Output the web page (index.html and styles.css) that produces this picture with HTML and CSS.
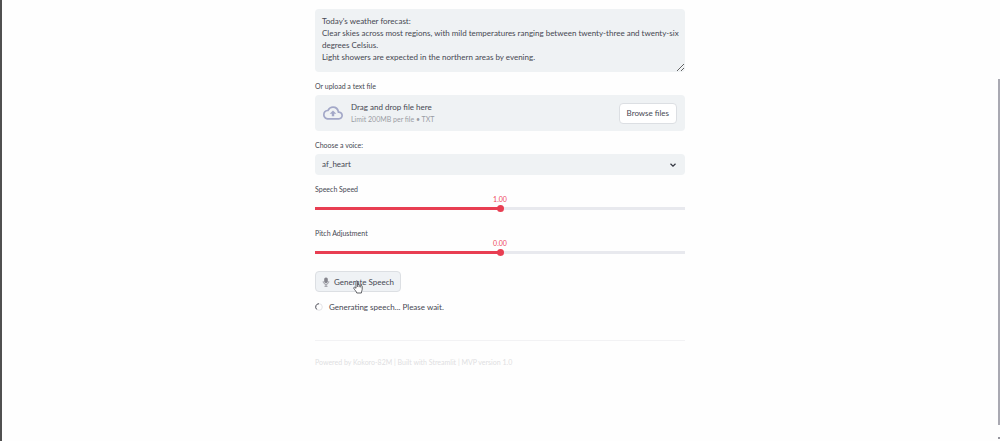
FILE: index.html
```
<!DOCTYPE html>
<html lang="en">
<head>
<meta charset="utf-8">
<meta name="viewport" content="width=device-width, initial-scale=1">
<title>Text to Speech</title>
<link rel="stylesheet" href="styles.css">
</head>
<body>
<main class="page">
  <form class="form">
    <textarea class="text-input" aria-label="Text to convert">Today's weather forecast:
Clear skies across most regions, with mild temperatures ranging between twenty-three and twenty-six degrees Celsius.
Light showers are expected in the northern areas by evening.</textarea>

    <div class="field">
      <span class="label" id="upload-label">Or upload a text file</span>
      <section class="dropzone" aria-labelledby="upload-label">
        <svg class="cloud" viewBox="0 0 24 24" aria-hidden="true">
          <path d="M19.35 10.04A7.49 7.49 0 0 0 12 4C9.11 4 6.6 5.64 5.35 8.04A5.994 5.994 0 0 0 0 14c0 3.31 2.69 6 6 6h13c2.76 0 5-2.24 5-5 0-2.64-2.05-4.78-4.65-4.96zM19 18H6c-2.21 0-4-1.79-4-4 0-2.05 1.53-3.76 3.56-3.97l1.07-.11.5-.95A5.469 5.469 0 0 1 12 6c2.62 0 4.88 1.86 5.39 4.43l.3 1.5 1.53.11A2.98 2.98 0 0 1 22 15c0 1.65-1.35 3-3 3zM8 13h2.55v3h2.9v-3H16l-4-4z"/>
        </svg>
        <div class="drop-text">
          <span>Drag and drop file here</span>
          <small class="hint">Limit 200MB per file • TXT</small>
        </div>
        <button type="button" class="button browse">Browse files</button>
      </section>
    </div>

    <div class="field">
      <label class="label" for="voice">Choose a voice:</label>
      <div class="select-wrap">
        <select class="select" id="voice"><option>af_heart</option></select>
        <svg class="chevron" viewBox="0 0 8 8" aria-hidden="true"><path d="M1.5 2.8 4 5.2 6.5 2.8"/></svg>
      </div>
    </div>

    <div class="field slider">
      <label class="label" for="speed">Speech Speed</label>
      <output class="value" for="speed">1.00</output>
      <input class="range" id="speed" type="range" min="0" max="2" step="0.05" value="1">
    </div>

    <div class="field slider">
      <label class="label" for="pitch">Pitch Adjustment</label>
      <output class="value" for="pitch">0.00</output>
      <input class="range" id="pitch" type="range" min="-1" max="1" step="0.05" value="0">
    </div>

    <div class="action">
      <button type="button" class="button generate">
        <svg class="mic" viewBox="0 0 8 10" aria-hidden="true">
          <rect class="mic-head" x="2.2" y="0.5" width="3.6" height="5.6" rx="1.6"/>
          <path class="mic-stand" d="M1.2 4.3c0 4 5.6 4 5.6 0M4 7.2v2M2.5 9.3h3"/>
        </svg>
        Generate Speech
      </button>
      <svg class="cursor" viewBox="0 0 10 14" aria-hidden="true">
        <path d="M3 8.3V1.7c0-1.2 1.6-1.2 1.6 0V5c.2-.7 1.5-.6 1.6.3.3-.6 1.5-.4 1.5.4.4-.5 1.5-.2 1.5.7v3c0 1-.8 1.6-.8 3.6H3.800C3.500 11.500 1.600 10 .8 8.300c-.4-1 .8-1.500 1.400-.7z"/>
        <path d="M4.600 5v2M6.200 5.500v1.700M7.700 6v1.400"/>
      </svg>
    </div>
  </form>

  <div class="status" role="status">
    <svg class="spinner" viewBox="0 0 8 8" aria-hidden="true">
      <circle class="spinner-track" cx="4" cy="4" r="3.3"/>
      <path class="spinner-arc" d="M1.700 6.400A3.300 3.300 0 0 1 4 .7"/>
    </svg>
    Generating speech... Please wait.
  </div>
  <footer class="footer">Powered by Kokoro-82M | Built with Streamlit | MVP version 1.0</footer>
</main>
<div class="window-edge"></div>
<div class="scrollbar"><div class="thumb"></div><div class="arrow"></div></div>
</body>
</html>
```
FILE: styles.css
```
* { box-sizing: border-box; }

body {
  margin: 0;
  background: #fefefe;
  color: #464852;
  font: 8px/12px Lato, "Noto Sans", sans-serif;
}

button, select, textarea { font: inherit; color: inherit; }

.page {
  max-width: 370px;
  margin: 0 auto;
  padding: 9px 0;
}

.form { display: flex; flex-direction: column; gap: 8px; }
.field { display: flex; flex-direction: column; }
.label { font-size: 7px; line-height: 13px; padding-bottom: 2px; }

.text-input {
  display: block;
  width: 100%;
  height: 63px;
  padding: 6px 2px 6px 7px;
  border: 0;
  border-radius: 4px;
  background: #eff2f4;
  outline: 0;
  overflow: hidden;
  resize: vertical;
}

.dropzone {
  display: flex;
  align-items: center;
  gap: 8px;
  padding: 6px 8px;
  border-radius: 4px;
  background: #eff2f4;
}
.cloud { width: 20px; height: 20px; fill: #a3a8c8; }
.drop-text { display: flex; flex-direction: column; flex: 1; }
.hint { font-size: 7px; line-height: 12px; color: #9b9da4; }

.button {
  border: 1px solid #dcdfe3;
  border-radius: 4px;
  height: 21px;
  padding: 0 7px;
  background: #fff;
}

.select-wrap { display: grid; align-items: center; }
.select-wrap > * { grid-area: 1 / 1; }
.select {
  appearance: none;
  width: 100%;
  height: 21px;
  padding: 0 7px 1px;
  border: 0;
  border-radius: 4px;
  background: #eff2f4;
}
.chevron {
  justify-self: end;
  width: 8px;
  height: 8px;
  margin-right: 8px;
  fill: none;
  stroke: #31333f;
  stroke-width: 1.2;
  pointer-events: none;
}

.slider { height: 36px; }
.slider .label { padding: 0; }
.value {
  font-size: 7px;
  line-height: 7px;
  text-align: center;
  color: #ef4b5b;
}
.range {
  appearance: none;
  width: 100%;
  height: 7px;
  margin: 2px 0 0;
  background: linear-gradient(90deg, #e83e52 50%, #e8e9ee 50%) center / 100% 3px no-repeat;
}
.range::-webkit-slider-thumb {
  appearance: none;
  width: 7px;
  height: 7px;
  border-radius: 50%;
  background: #e83e52;
}

.action { position: relative; align-self: start; }
.generate {
  display: flex;
  align-items: center;
  gap: 4px;
  padding: 0 6px;
  background: #eff2f5;
}
.mic { width: 8px; height: 10px; }
.mic-head { fill: #85858d; }
.mic-stand { fill: none; stroke: #9999a1; stroke-width: 1; }
.cursor {
  position: absolute;
  left: 38px;
  top: 9px;
  width: 10px;
  height: 14px;
  fill: #fff;
  stroke: #3b3c42;
  stroke-width: 0.8;
}

.status {
  display: flex;
  align-items: center;
  gap: 6px;
  padding: 9px 0 27px;
  border-bottom: 1px solid #f2f2f4;
}
.spinner { width: 8px; height: 8px; fill: none; }
.spinner-track { stroke: #e3e3e6; }
.spinner-arc { stroke: #55565e; }
.footer { padding-top: 15px; font-size: 7px; color: #dedfe2; }

.window-edge {
  position: fixed;
  inset: 0 auto 0 0;
  width: 2px;
  background: #505050;
}
.scrollbar {
  position: fixed;
  inset: 0 0 0 auto;
  width: 2px;
  display: flex;
  flex-direction: column;
  padding: 79px 0 2px;
  gap: 12px;
}
.thumb { flex: 1; background: #a9a9b2; }
.arrow { height: 2px; background: #96969e; }
```
